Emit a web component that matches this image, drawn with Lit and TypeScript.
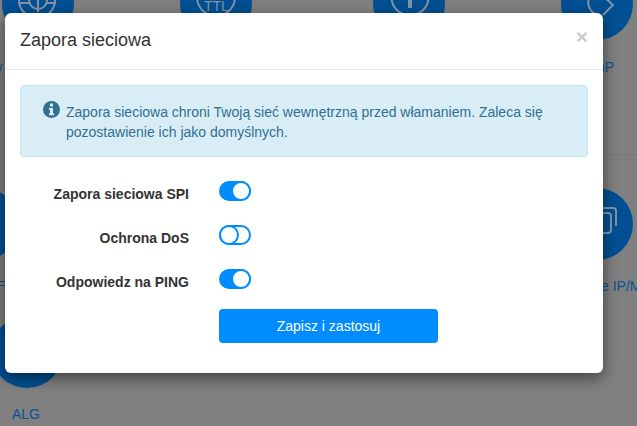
import { LitElement, html, css, svg } from "lit";
import { customElement } from "lit/decorators.js";
import { styleMap } from "lit/directives/style-map.js";

const circles = [
  [38, 4], [216, 4], [409, 4], [597, 4], [-17, 224], [597, 224], [27, 352],
];
const labels = [
  { t: "w", x: -8, y: 57 },
  { t: "nP", x: 597, y: 57 },
  { t: "e IP/M", x: 601, y: 276 },
  { t: "ALG", x: 12, y: 404 },
];
const rows = [
  { label: "Zapora sieciowa SPI", on: true },
  { label: "Ochrona DoS", on: false },
  { label: "Odpowiedz na PING", on: true },
];

@customElement("app-root")
export class AppRoot extends LitElement {
  static styles = css`
    :host {
      display: block;
      position: relative;
      width: 637px;
      height: 426px;
      overflow: hidden;
      background: #808080;
      font-family: "Liberation Sans", Arial, sans-serif;
      font-size: 14px;
      line-height: 20px;
      color: #333;
    }
    * { box-sizing: border-box; }
    .canvas { position: absolute; left: 0; top: 0; }
    .disc { fill: #005093; }
    .mark { fill: none; stroke: #8494a8; stroke-width: 2; }
    .mark-fill { fill: #8494a8; font: 14px "Liberation Sans", Arial, sans-serif; }
    .rule { stroke: #777; stroke-width: 1; }
    .rule-blue { stroke: #0c4a8c; stroke-width: 1; }
    .bg-label { position: absolute; color: #0c5096; font-size: 14px; white-space: nowrap; }
    .backdrop {
      position: absolute;
      inset: 0;
      padding: 13px 0 0 5px;
    }
    .modal {
      width: 598px;
      height: 360px;
      background: #fff;
      border-radius: 6px;
      box-shadow: 0 5px 15px rgba(0, 0, 0, 0.5);
    }
    .header {
      display: flex;
      justify-content: space-between;
      align-items: flex-start;
      padding: 15px;
      border-bottom: 1px solid #e5e5e5;
    }
    .title { font-size: 18px; line-height: 25.7px; font-weight: 400; margin: 0; }
    .close {
      font-size: 21px;
      line-height: 21px;
      font-weight: 700;
      color: #000;
      opacity: 0.2;
      margin-top: -2px;
    }
    .body { padding: 15px; }
    .alert {
      display: flex;
      gap: 6px;
      padding: 16px 15px 14px 22px;
      background: #d9edf7;
      border: 1px solid #bce8f1;
      border-radius: 4px;
      color: #31708f;
      height: 72px;
    }
    .alert svg { flex: none; margin-top: -1px; }
    .form {
      display: grid;
      grid-template-columns: 169px 219px;
      column-gap: 30px;
      row-gap: 24px;
      margin-top: 24px;
      align-items: center;
    }
    .label { text-align: right; font-weight: 700; height: 20px; line-height: 26px; }
    .switch {
      display: block;
      position: relative;
      width: 32px;
      height: 20px;
      border: 2px solid #008cff;
      border-radius: 10px;
      background: #fff;
    }
    .switch.on { background: #008cff; }
    .knob {
      position: absolute;
      left: -2px;
      top: -2px;
      width: 20px;
      height: 20px;
      border-radius: 50%;
      border: 2px solid #008cff;
      background: #fff;
    }
    .switch.on .knob { left: 10px; }
    .save {
      grid-column: 2;
      height: 34px;
      margin-top: -4px;
      border: none;
      border-radius: 4px;
      background: #008cff;
      color: #fff;
      font: inherit;
    }
  `;

  render() {
    return html`
      <svg class="canvas" width="637" height="426" viewBox="0 0 637 426">
        <line class="rule" x1="0" y1="154.5" x2="637" y2="154.5"></line>
        <line class="rule-blue" x1="0" y1="281.5" x2="5" y2="281.5"></line>
        <line class="rule-blue" x1="0" y1="285.5" x2="5" y2="285.5"></line>
        ${circles.map(([x, y]) => svg`<circle class="disc" cx=${x} cy=${y} r="36"></circle>`)}
        <circle class="mark" cx="37" cy="0" r="18"></circle>
        <circle class="mark" cx="38" cy="0" r="9"></circle>
        <path class="mark" d="M18 3H30M46 3H56M38 -6V12"></path>
        <circle class="mark" cx="216" cy="-3" r="19"></circle>
        <text class="mark-fill" x="204" y="11">TTL</text>
        <circle class="mark" cx="410" cy="-3" r="18.5"></circle>
        <rect class="mark-fill" x="408" y="-2" width="4" height="10"></rect>
        <path class="mark" d="M589 -2Q586 8 595 14M603 -4L613 5L603 15"></path>
        <path class="mark" d="M596 213H608Q611 213 611 216V230Q611 233 608 233H596"></path>
        <path class="mark" d="M598 208H613Q616 208 616 211V226"></path>
      </svg>
      ${labels.map(
        (l) => html`<span class="bg-label" style=${styleMap({ left: `${l.x}px`, top: `${l.y}px` })}>${l.t}</span>`
      )}
      <div class="backdrop">
        <div class="modal">
          <div class="header">
            <h4 class="title">Zapora sieciowa</h4>
            <span class="close">×</span>
          </div>
          <div class="body">
            <div class="alert">
              <svg width="17" height="17" viewBox="0 0 17 17">
                <circle cx="8.5" cy="8.5" r="8.5" fill="#31708f"></circle>
                <rect x="7" y="2.6" width="3" height="2.8" rx="0.4" fill="#d9edf7"></rect>
                <path d="M6 7h4v5.2h1.1v2H6v-2h1.1V9H6z" fill="#d9edf7"></path>
              </svg>
              <span>Zapora sieciowa chroni Twoją sieć wewnętrzną przed włamaniem. Zaleca się pozostawienie ich jako domyślnych.</span>
            </div>
            <div class="form">
              ${rows.map(
                (r) => html`
                  <span class="label">${r.label}</span>
                  <span class="switch ${r.on ? "on" : ""}"><span class="knob"></span></span>
                `
              )}
              <button class="save">Zapisz i zastosuj</button>
            </div>
          </div>
        </div>
      </div>
    `;
  }
}
